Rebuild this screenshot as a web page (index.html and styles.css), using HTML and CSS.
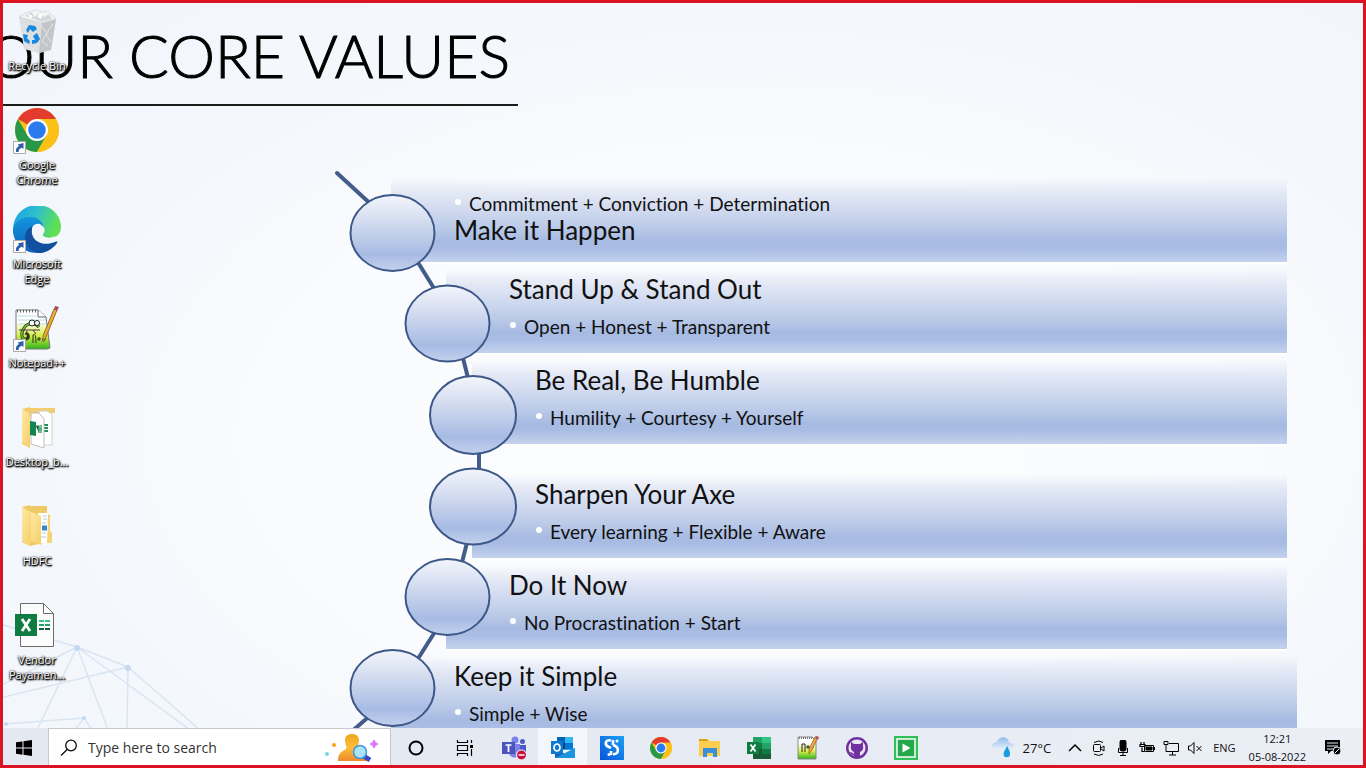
FILE: index.html
```html
<!DOCTYPE html>
<html lang="en">
<head>
<meta charset="utf-8">
<meta name="viewport" content="width=device-width, initial-scale=1">
<title>Desktop</title>
<link rel="stylesheet" href="styles.css">
</head>
<body>
<svg class="defs" aria-hidden="true">
  <defs>
    <linearGradient id="node" x1="0" y1="0" x2="0" y2="1"><stop offset="0" stop-color="#f3f5fb"/><stop offset=".3" stop-color="#d8e0f1"/><stop offset=".78" stop-color="#a7bbe3"/><stop offset="1" stop-color="#c3d1ed"/></linearGradient>
    <linearGradient id="edgeTop" x1="0" y1="0" x2="1" y2=".3"><stop offset="0" stop-color="#1b9de0"/><stop offset=".5" stop-color="#2ebfd0"/><stop offset="1" stop-color="#5fe052"/></linearGradient>
    <linearGradient id="edgeLeft" x1="0" y1="0" x2="0" y2="1"><stop offset="0" stop-color="#1394de"/><stop offset="1" stop-color="#0c62bd"/></linearGradient>
    <linearGradient id="paper" x1="0" y1="0" x2="0" y2="1"><stop offset=".3" stop-color="#fff"/><stop offset=".65" stop-color="#d8ee4a"/><stop offset="1" stop-color="#2fb51c"/></linearGradient>
    <linearGradient id="folder" x1="0" y1="0" x2="1" y2="1"><stop offset="0" stop-color="#ffe9a6"/><stop offset="1" stop-color="#f5cf66"/></linearGradient>
    <linearGradient id="person" x1="0" y1="0" x2="0" y2="1"><stop offset="0" stop-color="#f0a21e"/><stop offset=".5" stop-color="#fbbf3a"/><stop offset="1" stop-color="#f0892b"/></linearGradient>
    <linearGradient id="cloud" x1="0" y1="0" x2="0" y2="1"><stop offset="0" stop-color="#8dbcf0"/><stop offset="1" stop-color="#e6eef8"/></linearGradient>
    <linearGradient id="blue" x1="0" y1="1" x2="1" y2="0"><stop offset="0" stop-color="#0a54da"/><stop offset="1" stop-color="#19a0f2"/></linearGradient>
    <symbol id="chrome" viewBox="0 0 44 44">
      <circle cx="22" cy="22" r="22" fill="#fbc116"/>
      <path d="M22 22 3 11A22 22 0 0 1 41 11Z" fill="#e33b2e"/>
      <path d="M22 22 31.500 27.500 22 44A22 22 0 0 1 3 11l9.500 16.500Z" fill="#279847"/>
      <path d="M22 11H41A22 22 0 0 1 22 44l9.500-16.500Z" fill="#fbc116"/>
      <circle cx="22" cy="22" r="11" fill="#fff"/><circle cx="22" cy="22" r="8.800" fill="#2c7bee"/>
    </symbol>
    <symbol id="shortcut" viewBox="0 0 13 13">
      <path d="M.5.5h12v12H.5z" fill="#fdfdfd" stroke="#a9a9a9"/>
      <path d="M3 11c-.4-3 .8-5 3-5.900L4.800 3.500 10.500 2v6L8.800 6.700C6.500 7.500 5.500 8.800 5.600 11Z" fill="#2d5fa8"/>
    </symbol>
  </defs>
</svg>

<div class="screen">
  <main class="desktop">
    <section class="wallpaper" aria-label="Our core values">
      <svg class="mesh" viewBox="0 580 240 148" width="240" height="148" aria-hidden="true">
        <g fill="none" stroke="#d9e5f3" stroke-width="1.500">
          <path d="M0 624 77 647 128 667M0 698 128 667M77 647 0 686M77 647 37 730M77 647 108 730M77 647 190 730M128 667 200 730M128 667 127 730M5 724 84 718 92 730M84 718 75 730"/>
        </g>
        <g fill="#c6d8ef"><circle cx="77" cy="648" r="3"/><circle cx="128" cy="668" r="3"/><circle cx="84" cy="718" r="2"/><circle cx="6" cy="724" r="2"/></g>
      </svg>
      <h1 class="slide-title">OUR CORE VALUES</h1>
      <ol class="values">
        <li class="value value-outer"><p class="detail">Commitment + Conviction + Determination</p><h2 class="name">Make it Happen</h2></li>
        <li class="value value-middle"><h2 class="name">Stand Up &amp; Stand Out</h2><p class="detail">Open + Honest + Transparent</p></li>
        <li class="value value-inner"><h2 class="name">Be Real, Be Humble</h2><p class="detail">Humility + Courtesy + Yourself</p></li>
        <li class="value value-inner value-spaced"><h2 class="name">Sharpen Your Axe</h2><p class="detail">Every learning + Flexible + Aware</p></li>
        <li class="value value-middle"><h2 class="name">Do It Now</h2><p class="detail">No Procrastination + Start</p></li>
        <li class="value value-outer value-last"><h2 class="name">Keep it Simple</h2><p class="detail">Simple + Wise</p></li>
      </ol>
      <svg class="nodes" viewBox="3 3 600 740" width="600" height="740" aria-hidden="true">
        <path d="M337 173 375 208M414 256 440 298M461 350 471 390M479 440V480M469 535 460 570M438 627 414 665M373 713 350 733" fill="none" stroke="#425d89" stroke-width="4" stroke-linecap="round"/>
        <g fill="url(#node)" stroke="#3c5888" stroke-width="2">
          <ellipse cx="392.500" cy="233" rx="42" ry="38"/><ellipse cx="447.500" cy="323.500" rx="42" ry="38"/><ellipse cx="473" cy="415" rx="43" ry="39"/><ellipse cx="473" cy="506.500" rx="43" ry="38"/><ellipse cx="447.500" cy="597" rx="42" ry="38"/><ellipse cx="392.500" cy="688" rx="42" ry="38"/>
        </g>
      </svg>
    </section>

    <nav class="shortcuts" aria-label="Desktop shortcuts">
      <a class="shortcut" href="#recycle">
        <svg class="pic" viewBox="0 0 48 48" aria-hidden="true">
          <path d="M6 9 43 11 38 42 26 45 11 41Z" fill="#dcdedf"/><path d="M29 15 43 11 38 42 26 45Z" fill="#c3c6c8"/>
          <path d="M6 9 15 4l8-2 6 2 6-1 8 8-14 4Z" fill="#f3f4f4" stroke="#cfd1d2" stroke-width=".7"/><path d="m12 8 6-4 4 5 5-5 4 5 5-3 3 5-10 3-8-3Z" fill="#d5d8da"/><path d="m15 6 5 2-3 3Zm11-1 4 1-2 5-3-2Z" fill="#fff"/>
          <path d="m28 18 6 7-5 8 6 5M40 16l-7 10 5 8M8 16l5 3-2 7 5 5-3 7 8 3 4-7" fill="none" stroke="#e6e8e9"/>
          <path d="m13 22 3-5 6 1 2 3-4 3-3-3-2 4Zm-3 4 5 1-1 3 3 3-1 3-5-3Zm14-1 3 6-3 4-5 1v-4h3l-2-4Z" fill="#168ae0"/>
        </svg>
        <span class="label">Recycle Bin</span>
      </a>
      <a class="shortcut" href="#chrome-app">
        <svg class="pic" viewBox="0 0 48 48" aria-hidden="true"><use href="#chrome" x="2" y="1" width="44" height="44"/><use href="#shortcut" x="0" y="34" width="13" height="13"/></svg>
        <span class="label">Google Chrome</span>
      </a>
      <a class="shortcut" href="#edge-app">
        <svg class="pic" viewBox="0 0 48 48" aria-hidden="true">
          <path d="M0 24C0 10 10-1 24-1s24 10 24 22c0 7-5 11-11 11-5 0-8-2-7-4 3-3 2-9-5-10C13 18 4 22 0 28Z" fill="url(#edgeTop)"/>
          <path d="M0 24c1-8 9-13 17-13 8 0 13 5 13 10-5-5-15-1-14 9 1 8 7 14 16 16-3 1-6 1-8 1C10 47 0 36 0 24Z" fill="url(#edgeLeft)"/>
          <path d="M20 20c-5 12 7 22 22 16 2-1 3 0 2 1-4 6-11 10-18 10-9-2-14-8-14-15 0-6 3-10 8-12Z" fill="#124f9f"/>
          <path d="M20 20c4-4 10-2 10 3 0 3-2 4-1 6 2 3 8 4 13 1-2 4-6 6-10 6-9 0-15-9-12-16Z" fill="#f3f7fc"/>
          <use href="#shortcut" x="0" y="34" width="13" height="13"/>
        </svg>
        <span class="label">Microsoft Edge</span>
      </a>
      <a class="shortcut" href="#notepad-app">
        <svg class="pic" viewBox="0 0 48 48" aria-hidden="true">
          <path d="M3 5h22l8 7 4 31-3 1H3Z" fill="url(#paper)" stroke="#777"/><path d="M25 5v7h8" fill="#fff" stroke="#666"/>
          <path d="M4 6h21" stroke="#666" stroke-width="3" stroke-dasharray="1 2"/><path d="M5 11h20M5 15h28M5 19h28" stroke="#b9dbe5"/>
          <path d="M26 22c-4-5-12-4-15 1-4 6-2 12 2 11 4-1 2-6 0-5" fill="none" stroke="#28391d" stroke-width="3"/><path d="M26 22c-4-5-12-4-15 1-4 6-2 12 2 11" fill="none" stroke="#75c338" stroke-width="1.500"/><path d="M6 25h21M14 26l-2 4m8-5 3 4" stroke="#45333b"/><circle cx="19" cy="18" r="3" fill="#fff" stroke="#222"/><circle cx="24" cy="18" r="2.500" fill="#fff" stroke="#222"/>
          <path d="M20 38v-8q3-3 3 8m1-4h4m-2-2v4m3-2h4m-2-2v4" fill="none" stroke="#273117"/>
          <path d="M44 5 33 32l-3 5V31L41 4Z" fill="#f3ad29" stroke="#6b552e" stroke-width=".8"/><path d="m41 4 1-3 4 1-2 4Z" fill="#a34f5b"/>
          <use href="#shortcut" x="0" y="34" width="13" height="13"/>
        </svg>
        <span class="label">Notepad++</span>
      </a>
      <a class="shortcut" href="#desktop-backup">
        <svg class="pic" viewBox="0 -1 48 48" aria-hidden="true">
          <path d="M9 4 17 2v1h25v5H25L17 13v30L9 39Z" fill="#f2cd70"/><path d="M26 6h8l5 3v31H26Z" fill="#fff" stroke="#cfcfcf"/><path d="M30 20h5m-5 3h5m-5 3h5" stroke="#238e59" stroke-width="2"/>
          <path d="M18 8h8l5 6v29l-13-4Z" fill="#fff" stroke="#bfbfbf"/><path d="m17 16 6 1v14l-6-1Z" fill="#148450"/><path d="M23 21h3v7m2-8v8m-4-4h5" stroke="#43a675" stroke-width="1.500"/><path d="M9 4 17 9v33l-8-5Z" fill="url(#folder)"/>
        </svg>
        <span class="label">Desktop_b...</span>
      </a>
      <a class="shortcut" href="#hdfc">
        <svg class="pic" viewBox="0 -1 48 48" aria-hidden="true">
          <path d="M9 3 17 1v1h17v8l3 1v16l2 3v9h-9L17 42 9 38Z" fill="#efc965"/><path d="M25 9h10v30H24Z" fill="#fff"/><path d="M30 12h4m-4 3h4m-5 4h4m-4 10h4m-5 4h5" stroke="#b6c6db"/><path d="M29 24h5" stroke="#3587d5" stroke-width="5"/>
          <path d="m18 8 10 4v29l-10-4Z" fill="url(#folder)"/><path d="m9 3 9 5v34l-9-5Z" fill="url(#folder)"/><path d="M35 12h2v16l2 1v10h-5Z" fill="#f5d477"/>
        </svg>
        <span class="label">HDFC</span>
      </a>
      <a class="shortcut" href="#vendor">
        <svg class="pic" viewBox="0 -1 48 48" aria-hidden="true">
          <path d="M7.500.5h23l10 10v33h-33Z" fill="#fcfcfc" stroke="#6c6c6c"/><path d="M30.500.5v10h10" fill="none" stroke="#6c6c6c"/><path d="M2 11h22v22H2z" fill="#107c41"/><path d="m9 16 8 12M17 16 9 28" stroke="#fff" stroke-width="2.800"/>
          <path d="M26 18h5m1 0h5" stroke="#33c481" stroke-width="2"/><path d="M26 22h5m1 0h5" stroke="#21a366" stroke-width="2"/><path d="M26 26h5m1 0h5" stroke="#185c37" stroke-width="2"/>
        </svg>
        <span class="label">Vendor Payamen...</span>
      </a>
    </nav>
  </main>

  <footer class="taskbar">
    <button class="start" type="button" aria-label="Start"><svg width="16" height="16" viewBox="0 0 16 16"><path d="M0 2.300 6.500 1.400v6.100H0ZM7.500 1.200 16 0v7.500H7.500ZM0 8.500h6.500v6.200L0 13.800ZM7.500 8.500H16V16l-8.500-1.200Z"/></svg></button>
    <label class="search">
      <svg width="18" height="18" viewBox="0 0 18 18" aria-hidden="true"><circle cx="11" cy="6.500" r="5.300" fill="none" stroke="#111" stroke-width="1.300"/><path d="M7.200 10.500 1 16.500" stroke="#111" stroke-width="1.400"/></svg>
      <input class="search-box" type="text" placeholder="Type here to search" aria-label="Type here to search">
      <svg class="search-art" width="56" height="30" viewBox="0 0 56 30" aria-hidden="true">
        <path d="M21 7c0-8 14-8 14 0 0 4-2 6-1 9 8 3 9 6 9 12H14c0-6 2-9 8-12 1-3-1-5-1-9Z" fill="url(#person)"/>
        <path d="m38 22 8 5" stroke="#3b45c7" stroke-width="5"/><circle cx="36" cy="19" r="6.500" fill="#a9e4f9" stroke="#4595d7" stroke-width="1.500"/><circle cx="10" cy="12" r="2" fill="#f7a51b"/><circle cx="3" cy="21" r="2" fill="#70d8e8"/><path d="M50 7q1 3 4 4-3 1-4 4-1-3-4-4 3-1 4-4Z" fill="#dc79f5" stroke="#dc79f5"/>
      </svg>
    </label>
    <div class="apps">
      <button class="app" type="button" aria-label="Cortana"><svg viewBox="0 0 24 24"><circle cx="12" cy="12" r="6.500" fill="none" stroke="#000" stroke-width="2"/></svg></button>
      <button class="app" type="button" aria-label="Task view"><svg viewBox="0 0 24 24"><path d="M4.500 4v2.500h10V4M4.500 20v-2.500h10V20M4.500 9.500h10v5h-10ZM18.500 4v3m0 6v7" fill="none" stroke="#000" stroke-width="1.200"/><path d="M17 9h3v3h-3z"/></svg></button>
      <button class="app" type="button" aria-label="Teams"><svg viewBox="0 0 24 24"><circle cx="13" cy="4" r="3.500" fill="#7b83eb"/><circle cx="20.500" cy="5.500" r="2.500" fill="#5059c9"/><path d="M17 9h7v6q-1 5-7 4Z" fill="#5059c9"/><path d="M7 8h11v9c-1 6-10 6-11 0Z" fill="#7b83eb"/><path d="M0 6h13v12H0z" fill="#4b53bc"/><path d="M3.500 9h6M6.500 9v7" stroke="#fff" stroke-width="1.700"/><circle cx="19.500" cy="19" r="5" fill="#c50f3c" stroke="#fff"/><path d="M16.500 19h6" stroke="#fff" stroke-width="1.500"/></svg></button>
      <button class="app app-active" type="button" aria-label="Outlook"><svg viewBox="0 0 24 24"><path d="M6 1h16v13H6z" fill="#28a8ea"/><path d="M6 1h8v6H6z" fill="#0364b8"/><path d="M14 1h8v6h-8z" fill="#35b8f1"/><path d="M6 7h8v6H6z" fill="#14447d"/><path d="M14 7h8v6h-8z" fill="#0078d4"/><path d="m4 12 10 6 10-6v10H4Z" fill="#1069b8"/><path d="m24 12-20 10h20Z" fill="#1b94df"/><path d="M0 5h12v13H0z" fill="#0f78cf"/><ellipse cx="6" cy="11.500" rx="3" ry="3.500" fill="none" stroke="#fff" stroke-width="1.700"/></svg></button>
      <button class="app" type="button" aria-label="Snip"><svg viewBox="0 0 24 24"><path d="M0 0h24v24H0z" fill="url(#blue)"/><path d="M11 4.500C5 3 4 9 9 11l2 1m2-3c7 2 6 10 0 9M13 9V4m-2 15v-4" fill="none" stroke="#fff" stroke-width="2.600"/><circle cx="17" cy="5" r="1.500" fill="#fff"/><circle cx="9" cy="18.500" r="1.500" fill="#fff"/></svg></button>
      <button class="app" type="button" aria-label="Chrome"><svg viewBox="0 0 24 24"><use href="#chrome" x="1" y="1" width="22" height="22"/></svg></button>
      <button class="app" type="button" aria-label="File Explorer"><svg viewBox="0 0 24 24"><path d="M1 3h8l2 2h11v5H1Z" fill="#dd9f13"/><path d="M1 5h21v15H1Z" fill="#fccd4f"/><path d="M5 12h14v9h-4v-4H9v4H5Z" fill="#3990d8"/></svg></button>
      <button class="app" type="button" aria-label="Excel"><svg viewBox="0 0 24 24"><path d="M6 1h18v22H6z" fill="#185c37"/><path d="M6 1h9v6H6z" fill="#21a366"/><path d="M15 1h9v6h-9z" fill="#33c481"/><path d="M6 7h9v6H6z" fill="#107c41"/><path d="M15 7h9v6h-9z" fill="#21a366"/><path d="M15 13h9v5h-9z" fill="#107c41"/><path d="M0 6h12v12H0z" fill="#107c41"/><path d="m3.500 8.500 5 7m0-7-5 7" stroke="#fff" stroke-width="1.700"/></svg></button>
      <button class="app" type="button" aria-label="Notepad++"><svg viewBox="0 0 24 24"><path d="M2 1h14l4 4v18H2Z" fill="url(#paper)" stroke="#888"/><path d="M3 2h13" stroke="#777" stroke-width="2" stroke-dasharray="1 1"/><path d="M6 16V8h3v8m1-5h4m-2-2v4m3-2h3" fill="none" stroke="#222"/><path d="m22 1-6 13-3 4v-5l6-12Z" fill="#f3a52e" stroke="#66522b" stroke-width=".6"/><path d="m20 0 3 1-1 3-3-2Z" fill="#b65462"/></svg></button>
      <button class="app" type="button" aria-label="GitHub"><svg viewBox="0 0 24 24"><circle cx="12" cy="12" r="11" fill="#7130a0"/><circle cx="12" cy="12" r="8.500" fill="#e7e6f3"/><path d="M9 22v-3q-3 0-4-3 2 0 4 2v-2q-4-2-3-6V6l3 2h6l3-2v4q1 4-3 6v6Z" fill="#7130a0"/></svg></button>
      <button class="app" type="button" aria-label="Player"><svg viewBox="0 0 24 24"><path d="M0 0h24v24H0z" fill="#31bf59"/><path d="M3 3h18v18H3z" fill="#23a94a" stroke="#fff" stroke-width="1.500"/><path d="m8.500 7.500 8 4.500-8 4.500Z" fill="#fff"/></svg></button>
    </div>
    <div class="tray">
      <button class="weather" type="button"><svg width="24" height="22" viewBox="0 0 24 22" aria-hidden="true"><path d="M5 12C-2 12-1 5 5 5c2-7 12-6 12 1 7 0 6 7 1 6Z" fill="url(#cloud)"/><path d="M15 9c2 4 3 5 3 8a3.200 3.200 0 0 1-6.400 0c0-3 2-4 3.400-8Z" fill="#1a9bdd"/></svg>27°C</button>
      <div class="status">
        <button class="tray-btn" type="button" aria-label="Show hidden icons"><svg viewBox="0 0 16 16"><path d="m2 11 6-6 6 6" stroke-width="1.500"/></svg></button>
        <button class="tray-btn" type="button" aria-label="Meet now"><svg viewBox="0 0 16 16"><rect x="2.500" y="4.500" width="7" height="7" rx="1"/><path d="m10 8 3-2v5l-3-2M3 2.500q5-3 9 0M3 14q5 3 9 0"/></svg></button>
        <button class="tray-btn" type="button" aria-label="Microphone"><svg viewBox="0 0 16 16"><rect x="5" y="0" width="6" height="11" rx="2" fill="#000"/><path d="M3.500 8v4.500h9V8M8 12v3.500m-3 0h6"/></svg></button>
        <button class="tray-btn" type="button" aria-label="Battery"><svg viewBox="0 0 16 16"><path d="M5.500 5.500h9v6h-9Z"/><path d="M7 7h6v3H7z" fill="#000"/><path d="M15.500 7v3M2 2v2m3-2v2M1 4.500h5v2H1Zm2 3v4h2" stroke-width="1.200"/></svg></button>
        <button class="tray-btn" type="button" aria-label="Network"><svg viewBox="0 0 16 16"><path d="M6 3.500h9.500v8H3V8M9.500 12v3M6 15h7M1 1.500h4v3H1Zm2 3V8"/></svg></button>
        <button class="tray-btn" type="button" aria-label="Muted"><svg viewBox="0 0 16 16"><path d="M1.500 6h2L7 2.500v11L3.500 10h-2ZM9.500 6l5 5m0-5-5 5"/></svg></button>
      </div>
      <button class="language" type="button">ENG</button>
      <button class="clock" type="button"><time datetime="12:21">12:21</time><time datetime="2022-08-05">05-08-2022</time></button>
      <button class="notices" type="button" aria-label="Notifications"><svg width="18" height="18" viewBox="0 0 18 18"><path d="M1 1h15v11H7l-3 3v-3H1Z"/><path d="M3 4h11M3 7h11M3 10h6" stroke="#e8ebf1"/><circle cx="13" cy="12" r="4" fill="#000" stroke="#e8ebf1"/><path d="m11 14 4-4" stroke="#fff"/></svg></button>
    </div>
  </footer>
</div>
</body>
</html>
```
FILE: styles.css
```css
* { box-sizing: border-box; }

body {
  margin: 0;
  font-family: "Open Sans", "Noto Sans", sans-serif;
  color: #111;
}

button {
  border: 0;
  padding: 0;
  background: none;
  color: inherit;
  font: inherit;
}

.defs {
  position: absolute;
  width: 0;
  height: 0;
}

.screen {
  display: flex;
  flex-direction: column;
  height: 100vh;
  overflow: hidden;
  border: 3px solid #dc1322;
}

.desktop {
  position: relative;
  flex: 1;
  min-height: 0;
}

/* Wallpaper slide, drawn behind the shortcuts */
.wallpaper {
  position: absolute;
  inset: 0;
  overflow: hidden;
  background: radial-gradient(ellipse at 55% 60%, #fcfdfe 0%, #fafbfe 45%, #f4f7fc 68%, #f2f6fc 100%);
}

.mesh {
  position: absolute;
  left: -3px;
  bottom: 0;
}

.slide-title {
  display: flex;
  justify-content: flex-end;
  width: 515px;
  height: 103px;
  margin: 0;
  padding: 17px 8px 0 0;
  border-bottom: 2px solid #1c1c1c;
  color: #000;
  font: 300 59px/72px Lato, sans-serif;
  white-space: nowrap;
  -webkit-text-stroke: 1px #000;
}

.values {
  margin: 72px 0 0;
  padding: 0 76px 0 0;
  list-style: none;
  font-family: Lato, sans-serif;
  font-variant-ligatures: none;
}

.value {
  height: 84px;
  margin-bottom: 7px;
  padding: 4px 0 0 63px;
  background: linear-gradient(#ffffff00 0%, #e3e8f5 18%, #ccd7ee 42%, #bccbe8 58%, #a6bae2 76%, #a9bde4 84%, #c4d2ed 100%);
  box-shadow: 0 2px 1px #fff;
}

.value-outer { margin-left: 388px; }
.value-middle { margin-left: 443px; }
.value-inner { margin-left: 469px; }
.value-spaced { margin-top: 30px; }
.value-last { margin-right: -10px; }
.value-outer:first-child { padding-top: 15px; }

.name {
  margin: 0;
  font-size: 26px;
  font-weight: 400;
  line-height: 32px;
}

.detail {
  display: flex;
  align-items: center;
  gap: 6px;
  margin: 0;
  padding: 11px 0 0 1px;
  font-size: 19px;
  line-height: 22px;
}

.value-outer:first-child .detail { padding-top: 0; }
.value-outer:first-child .name { line-height: 30px; }

.detail::before {
  width: 6px;
  height: 6px;
  margin: 0 2px 4px 0;
  border-radius: 50%;
  background: #fff;
  content: "";
}

.nodes {
  position: absolute;
  top: 0;
  left: 0;
}

/* Shortcuts */
.shortcuts {
  position: relative;
  display: grid;
  grid-auto-rows: 99px;
  width: 68px;
  padding-top: 5px;
}

.shortcut {
  display: flex;
  flex-direction: column;
  align-items: center;
  color: #fff;
  font-size: 11px;
  line-height: 15px;
  text-align: center;
  text-decoration: none;
  text-shadow: 0 0 2px #000, 1px 1px 1px #000, 0 1px 2px #000, 1px 1px 2px #000;
}

.pic {
  width: 48px;
  height: 48px;
  margin-bottom: 2px;
}

.label { max-width: 66px; }

/* Taskbar */
.taskbar {
  position: relative;
  display: flex;
  height: 37px;
  background: linear-gradient(90deg, #e4e9f1, #e6eaf3 50%, #ebeff5);
}

.start {
  display: grid;
  place-items: center;
  width: 45px;
  padding: 2px 3px 0 0;
}

.search {
  display: flex;
  align-items: center;
  gap: 10px;
  width: 343px;
  padding: 2px 10px 0 11px;
  border: 1px solid #c5c8cd;
  border-bottom: 0;
  background: #fff;
}

.search-box {
  flex: 1;
  min-width: 0;
  border: 0;
  padding: 0;
  outline: 0;
  background: none;
  font: 14px/20px "Open Sans", sans-serif;
}

.search-box::placeholder {
  color: #333;
  opacity: 1;
}

.apps { display: flex; }

.app {
  display: grid;
  place-items: center;
  width: 49px;
  padding-top: 2px;
}

.app svg {
  width: 24px;
  height: 24px;
}

.app-active { background: #f3f6fb; }

.tray {
  display: flex;
  align-items: center;
  margin-left: auto;
  padding: 2px 21px 0 0;
  font-size: 11px;
}

.weather {
  display: flex;
  align-items: center;
  gap: 7px;
  margin-right: 12px;
  font-size: 13px;
}

.status { display: flex; }

.tray-btn {
  display: grid;
  place-items: center;
  width: 24px;
}

.tray-btn svg {
  width: 16px;
  height: 16px;
  fill: none;
  stroke: #000;
}

.language { margin: 0 13px 0 6px; }

.clock {
  display: grid;
  line-height: 18px;
  text-align: center;
}

.notices {
  display: grid;
  margin-left: 18px;
}
```
